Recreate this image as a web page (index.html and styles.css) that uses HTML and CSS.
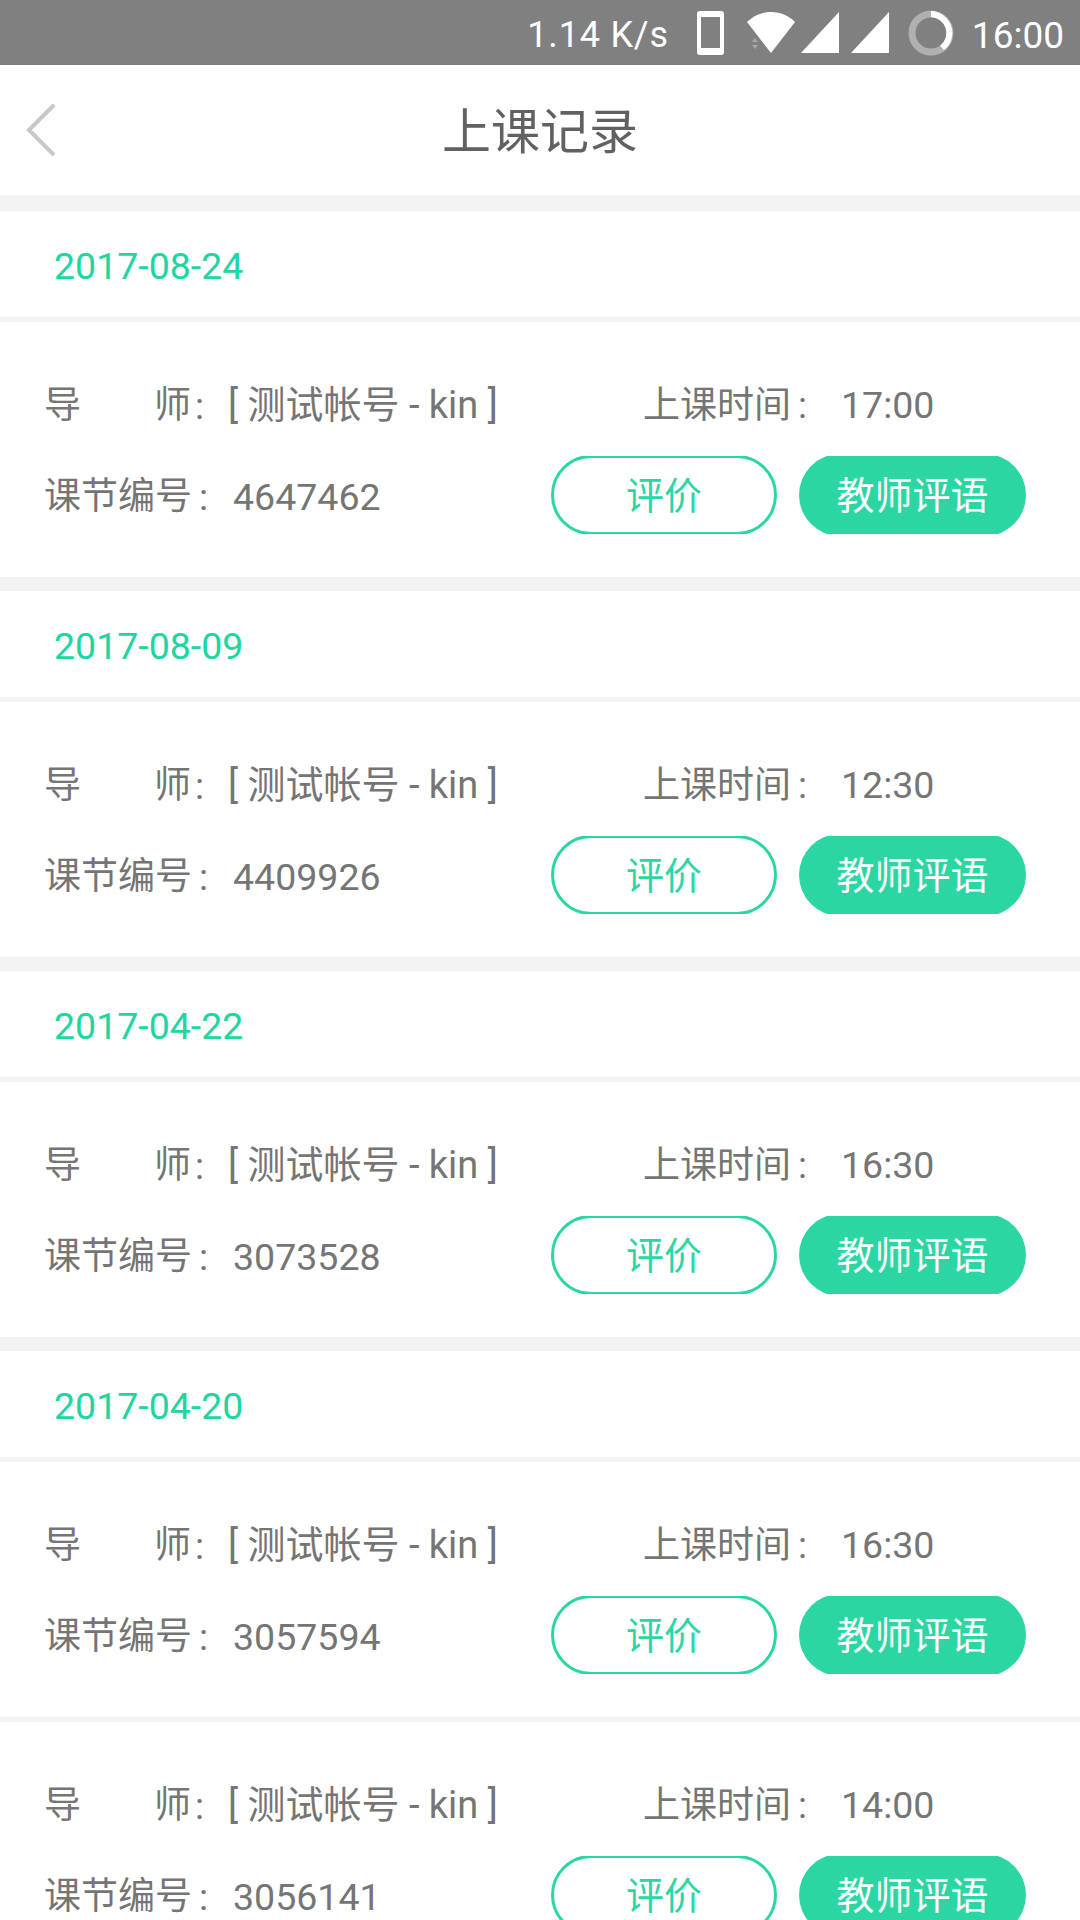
FILE: index.html
```html
<!DOCTYPE html>
<html>
  <head>
    <meta charset="utf-8" />
    <title>上课记录</title>
    <link rel="stylesheet" href="styles.css">
  </head>

  <body>
    <!-- ステータスバー -->
    <div class="status-bar">
      <span class="speed">1.14 K/s</span>
      <svg class="ic-phone" width="27" height="44" viewBox="0 0 27 44"><path fill="#fff" fill-rule="evenodd" d="M3 0h21a3 3 0 0 1 3 3v38a3 3 0 0 1-3 3H3a3 3 0 0 1-3-3V3a3 3 0 0 1 3-3zM4 6v31h19V6z"/></svg>
      <svg class="ic-wifi" width="48" height="42" viewBox="0 0 48 42"><path fill="#fff" d="M0 10C6 4 14 0 24 0s18 4 24 10L24 41z"/><path fill="#a8a8a8" d="M5 30l3-4 3 4zM5 33h6l-3 4z"/></svg>
      <svg class="ic-signal" width="38" height="41" viewBox="0 0 38 41"><path fill="#fff" d="M38 0v41H0z"/></svg>
      <svg class="ic-signal" width="38" height="41" viewBox="0 0 38 41"><path fill="#fff" d="M38 0v41H0z"/></svg>
      <svg class="ic-ring" width="46" height="46" viewBox="0 0 46 46"><circle cx="23" cy="23" r="19" fill="none" stroke="#b0b0b0" stroke-width="7"/><path fill="none" stroke="#fff" stroke-width="6" d="M23 4a19 19 0 0 1 11 34"/></svg>
      <span class="clock">16:00</span>
    </div>

    <!-- ナビ -->
    <div class="nav">
      <svg class="back" width="30" height="54" viewBox="0 0 30 54"><path fill="none" stroke="#c8c8c8" stroke-width="4" d="M28 2L3 27l25 25"/></svg>
      <div class="nav-title">上课记录</div>
    </div>

    <div class="list">
      <div class="date">2017-08-24</div>
      <div class="record">
        <div class="row">
          <span class="label teacher"><i>导</i><i>师</i></span><span class="colon">:</span>
          <span class="name">[ 测试帐号 - kin ]</span>
          <span class="time-label">上课时间<span class="colon">:</span></span>
          <span class="time">17:00</span>
        </div>
        <div class="row">
          <span class="label">课节编号</span><span class="colon">:</span>
          <span class="lesson-no">4647462</span>
          <a class="btn btn-line">评价</a>
          <a class="btn btn-fill">教师评语</a>
        </div>
      </div>

      <div class="date">2017-08-09</div>
      <div class="record">
        <div class="row">
          <span class="label teacher"><i>导</i><i>师</i></span><span class="colon">:</span>
          <span class="name">[ 测试帐号 - kin ]</span>
          <span class="time-label">上课时间<span class="colon">:</span></span>
          <span class="time">12:30</span>
        </div>
        <div class="row">
          <span class="label">课节编号</span><span class="colon">:</span>
          <span class="lesson-no">4409926</span>
          <a class="btn btn-line">评价</a>
          <a class="btn btn-fill">教师评语</a>
        </div>
      </div>

      <div class="date">2017-04-22</div>
      <div class="record">
        <div class="row">
          <span class="label teacher"><i>导</i><i>师</i></span><span class="colon">:</span>
          <span class="name">[ 测试帐号 - kin ]</span>
          <span class="time-label">上课时间<span class="colon">:</span></span>
          <span class="time">16:30</span>
        </div>
        <div class="row">
          <span class="label">课节编号</span><span class="colon">:</span>
          <span class="lesson-no">3073528</span>
          <a class="btn btn-line">评价</a>
          <a class="btn btn-fill">教师评语</a>
        </div>
      </div>

      <div class="date">2017-04-20</div>
      <div class="record">
        <div class="row">
          <span class="label teacher"><i>导</i><i>师</i></span><span class="colon">:</span>
          <span class="name">[ 测试帐号 - kin ]</span>
          <span class="time-label">上课时间<span class="colon">:</span></span>
          <span class="time">16:30</span>
        </div>
        <div class="row">
          <span class="label">课节编号</span><span class="colon">:</span>
          <span class="lesson-no">3057594</span>
          <a class="btn btn-line">评价</a>
          <a class="btn btn-fill">教师评语</a>
        </div>
      </div>

      <div class="record same-day">
        <div class="row">
          <span class="label teacher"><i>导</i><i>师</i></span><span class="colon">:</span>
          <span class="name">[ 测试帐号 - kin ]</span>
          <span class="time-label">上课时间<span class="colon">:</span></span>
          <span class="time">14:00</span>
        </div>
        <div class="row">
          <span class="label">课节编号</span><span class="colon">:</span>
          <span class="lesson-no">3056141</span>
          <a class="btn btn-line">评价</a>
          <a class="btn btn-fill">教师评语</a>
        </div>
      </div>
    </div>
  </body>
</html>
```

FILE: styles.css
```css
* {
  box-sizing: border-box;
}

html, body {
  margin: 0;
  height: 1920px;
  overflow: hidden;
}

body {
  background-color: #f3f3f3;
  font-family: Roboto, "Noto Sans CJK SC", sans-serif;
  color: #757575;
}

/* status bar */
.status-bar {
  height: 65px;
  background-color: #808080;
  color: #fff;
  display: flex;
  align-items: center;
  padding-right: 16px;
  justify-content: flex-end;
  font-size: 37px;
  line-height: 65px;
}

.speed {
  font-size: 36px;
  margin-right: 28px;
  letter-spacing: 0.8px;
  padding-top: 5px;
}

.ic-wifi {
  margin-left: 23px;
}

.ic-signal {
  margin-left: 12px;
}

.ic-signal:nth-of-type(3) {
  margin-left: 6px;
}

.ic-ring {
  margin-left: 19px;
}

.clock {
  margin-left: 18px;
  padding-top: 5px;
}

/* nav */
.nav {
  position: relative;
  height: 130px;
  background-color: #fff;
  display: flex;
  align-items: center;
  justify-content: center;
}

.back {
  position: absolute;
  left: 26px;
  top: 38px;
}

.nav-title {
  font-size: 49px;
  color: #616161;
  margin-bottom: 6px;
}

/* list */
.list {
  padding-top: 16px;
}

.date {
  height: 106px;
  background-color: #fff;
  color: #20d6a0;
  font-size: 37.5px;
  padding-left: 54px;
  padding-top: 30px;
  line-height: 50px;
}

.record {
  height: 255px;
  margin-top: 5px;
  margin-bottom: 14px;
  background-color: #fff;
  padding: 57px 54px 0 44px;
}

.record:nth-child(8) {
  margin-bottom: 5px;
}

.row {
  display: flex;
  align-items: center;
  font-size: 37.5px;
  line-height: 54px;
  height: 54px;
}

.row + .row {
  height: 78px;
  margin-top: 23px;
}

.row + .row > span {
  padding-top: 4px;
}

.label {
  width: 148px;
  font-size: 37px;
}

.teacher {
  display: flex;
  justify-content: space-between;
  width: 147px;
}

.teacher i {
  font-style: normal;
}

/* コロンは文字から少し離す */
.colon {
  display: inline-block;
  width: 36px;
  padding-left: 7px;
  white-space: nowrap;
}

.teacher + .colon {
  width: 37px;
  padding-left: 4px;
}

.name {
  width: 415px;
  font-size: 38px;
  padding-bottom: 2px;
}

.time-label {
  width: 198px;
  font-size: 37px;
}

.time {
  padding-bottom: 2px;
}

.lesson-no {
  width: 318px;
  margin-left: 5px;
}

/* buttons: the pill is a bit taller than the box and gets cut flat */
.btn {
  position: relative;
  isolation: isolate;
  overflow: hidden;
  display: flex;
  align-items: center;
  justify-content: center;
  height: 78px;
  font-size: 38px;
  padding-top: 2px;
}

.btn::before {
  content: "";
  position: absolute;
  z-index: -1;
  top: -1px;
  bottom: -1px;
  left: 0;
  right: 0;
  border-radius: 40px;
}

.btn-line {
  width: 226px;
  color: #2bd6a3;
}

.btn-line::before {
  border: 3px solid #2bd6a3;
}

.btn-fill {
  width: 227px;
  margin-left: 22px;
  color: #fff;
}

.btn-fill::before {
  top: -2px;
  bottom: -2px;
  border-radius: 41px;
  background-color: #2bd6a3;
}
```
